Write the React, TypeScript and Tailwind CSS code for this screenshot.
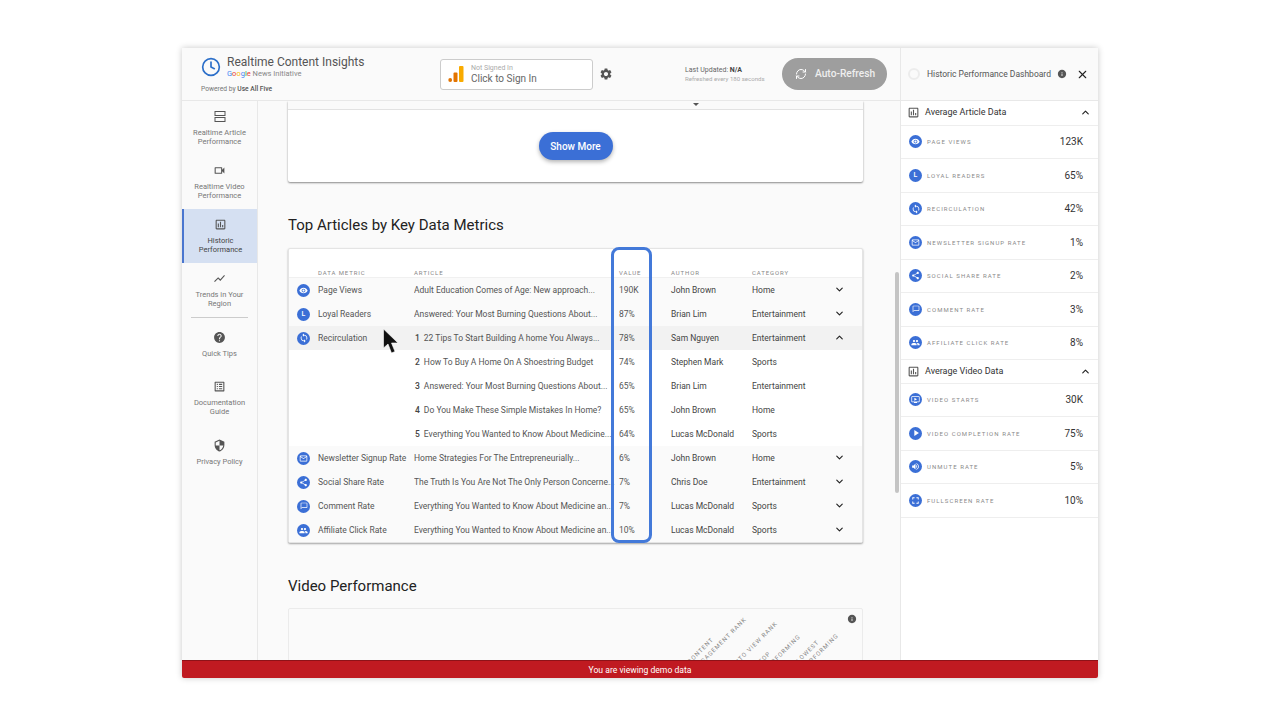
import type {ReactNode} from "react";
import {ChevronDown, ChevronUp, Clock, RefreshCw, X} from "lucide-react";
import {
  MdChatBubbleOutline,
  MdFullscreen,
  MdHelp,
  MdInfo,
  MdMailOutline,
  MdOndemandVideo,
  MdOutlineAssessment,
  MdOutlineListAlt,
  MdOutlineVideocam,
  MdPeople,
  MdPlayArrow,
  MdSecurity,
  MdSettings,
  MdShare,
  MdShowChart,
  MdSync,
  MdVisibility,
  MdVolumeUp,
} from "react-icons/md";

const MetricIcon = ({children}: {children: ReactNode}) => (
  <span className="flex items-center justify-center rounded-full bg-[#3b6fd6] text-white shrink-0 w-[13px] h-[13px]">
    {children}
  </span>
);

const icons: Record<string, ReactNode> = {
  views: <MdVisibility size={9} />,
  loyal: <span className="text-[7px] font-medium leading-none">L</span>,
  recirc: <MdSync size={10} />,
  mail: <MdMailOutline size={9} />,
  share: <MdShare size={9} />,
  comment: <MdChatBubbleOutline size={8} />,
  affiliate: <MdPeople size={9} />,
  starts: <MdOndemandVideo size={9} />,
  play: <MdPlayArrow size={10} />,
  mute: <MdVolumeUp size={9} />,
  full: <MdFullscreen size={11} />,
};

const TwoRowsIcon = () => (
  <svg width="12" height="11" viewBox="0 0 12 11" fill="none" stroke="currentColor" strokeWidth="1">
    <rect x="1" y="0.5" width="10" height="4" />
    <rect x="1" y="6.5" width="10" height="4" />
  </svg>
);

const navItems = [
  {icon: <TwoRowsIcon />, lines: ["Realtime Article", "Performance"]},
  {icon: <MdOutlineVideocam size={13} />, lines: ["Realtime Video", "Performance"]},
  {icon: <MdOutlineAssessment size={13} />, lines: ["Historic", "Performance"], active: true},
  {icon: <MdShowChart size={13} />, lines: ["Trends in Your", "Region"]},
];

const navItemsBottom = [
  {icon: <MdHelp size={13} />, lines: ["Quick Tips"], className: "h-[49px]"},
  {icon: <MdOutlineListAlt size={13} />, lines: ["Documentation", "Guide"], className: "h-[59px]"},
  {icon: <MdSecurity size={13} />, lines: ["Privacy Policy"], className: "h-[54px]"},
];

const rows = [
  {icon: "views", metric: "Page Views", article: "Adult Education Comes of Age: New approach...", value: "190K", author: "John Brown", category: "Home", chevron: "down"},
  {icon: "loyal", metric: "Loyal Readers", article: "Answered: Your Most Burning Questions About...", value: "87%", author: "Brian Lim", category: "Entertainment", chevron: "down"},
  {icon: "recirc", metric: "Recirculation", num: "1", article: "22 Tips To Start Building A home You Always...", value: "78%", author: "Sam Nguyen", category: "Entertainment", chevron: "up", open: true},
  {num: "2", article: "How To Buy A Home On A Shoestring Budget", value: "74%", author: "Stephen Mark", category: "Sports", sub: true},
  {num: "3", article: "Answered: Your Most Burning Questions About...", value: "65%", author: "Brian Lim", category: "Entertainment", sub: true},
  {num: "4", article: "Do You Make These Simple Mistakes In Home?", value: "65%", author: "John Brown", category: "Home", sub: true},
  {num: "5", article: "Everything You Wanted to Know About Medicine...", value: "64%", author: "Lucas McDonald", category: "Sports", sub: true},
  {icon: "mail", metric: "Newsletter Signup Rate", article: "Home Strategies For The Entrepreneurially...", value: "6%", author: "John Brown", category: "Home", chevron: "down"},
  {icon: "share", metric: "Social Share Rate", article: "The Truth Is You Are Not The Only Person Concerne...", value: "7%", author: "Chris Doe", category: "Entertainment", chevron: "down"},
  {icon: "comment", metric: "Comment Rate", article: "Everything You Wanted to Know About Medicine an...", value: "7%", author: "Lucas McDonald", category: "Sports", chevron: "down"},
  {icon: "affiliate", metric: "Affiliate Click Rate", article: "Everything You Wanted to Know About Medicine an...", value: "10%", author: "Lucas McDonald", category: "Sports", chevron: "down"},
];

const articleData = [
  {icon: "views", label: "PAGE VIEWS", value: "123K"},
  {icon: "loyal", label: "LOYAL READERS", value: "65%"},
  {icon: "recirc", label: "RECIRCULATION", value: "42%"},
  {icon: "mail", label: "NEWSLETTER SIGNUP RATE", value: "1%"},
  {icon: "share", label: "SOCIAL SHARE RATE", value: "2%"},
  {icon: "comment", label: "COMMENT RATE", value: "3%"},
  {icon: "affiliate", label: "AFFILIATE CLICK RATE", value: "8%"},
];

const videoData = [
  {icon: "starts", label: "VIDEO STARTS", value: "30K"},
  {icon: "play", label: "VIDEO COMPLETION RATE", value: "75%"},
  {icon: "mute", label: "UNMUTE RATE", value: "5%"},
  {icon: "full", label: "FULLSCREEN RATE", value: "10%"},
];

// rotated column headings of the chart, only their top ends are visible
const chartLabels = [
  {lines: ["CONTENT", "ENGAGEMENT RANK"], className: "left-[396px] top-[50px]"},
  {lines: ["AUTO VIEW RANK"], className: "left-[440px] top-[54px]"},
  {lines: ["TOP", "PERFORMING"], className: "left-[467px] top-[50px]"},
  {lines: ["LOWEST", "PERFORMING"], className: "left-[505px] top-[49px]"},
];

const NavItem = ({icon, lines, active, className = "h-[54px]"}: {icon: ReactNode; lines: string[]; active?: boolean; className?: string}) => (
  <div className={`${className} flex flex-col items-center pt-[8px] ${active ? "bg-[#d5e0f2] border-l-2 border-[#4a76cf] text-[#444]" : "text-[#777]"}`}>
    <span className="h-[14px] flex items-center text-[#555]">{icon}</span>
    <span className="mt-[4.5px] text-[7.5px] leading-[9.5px] text-center">
      {lines.map((line) => <span key={line} className="block">{line}</span>)}
    </span>
  </div>
);

const SideSection = ({title, data, headerClass}: {title: string; data: typeof articleData; headerClass: string}) => (
  <>
    <div className={`${headerClass} flex items-center pl-[6px] pr-[7px] border-b border-[#eee]`}>
      <MdOutlineAssessment size={13} className="text-[#555]" />
      <span className="ml-[5px] text-[9px] text-[#333] flex-1">{title}</span>
      <ChevronUp size={11} strokeWidth={2.5} className="text-[#222]" />
    </div>
    {data.map((item) => (
      <div key={item.label} className="h-[33.5px] flex items-center pl-[8px] pr-[15px] border-b border-[#eee]">
        <MetricIcon>{icons[item.icon]}</MetricIcon>
        <span className="ml-[5px] text-[6px] tracking-[1.05px] text-[#8a8a8a] flex-1">{item.label}</span>
        <span className="text-[10px] text-[#333]">{item.value}</span>
      </div>
    ))}
  </>
);

const App = () => {
  return (
    <div className="w-[1280px] h-[720px] bg-white pt-[48px] pl-[182px] font-[Roboto,sans-serif] overflow-hidden">
      <div className="relative w-[916px] h-[630px] flex flex-col shadow-[0_0_6px_rgba(0,0,0,0.22)] rounded-b-[2px]">
        <div className="h-[612px] flex">
          <div className="w-[718px] flex flex-col">
            {/* top bar */}
            <header className="h-[53px] shrink-0 flex items-center bg-[#fafafa] border-b border-[#e8e8e8] relative z-10">
              <div className="w-[258px] pl-[19px] shrink-0">
                <div className="flex items-center gap-[6px]">
                  <Clock size={20} strokeWidth={2} className="text-[#2c6fc9]" />
                  <div>
                    <div className="text-[12px] leading-[13px] text-[#555]">Realtime Content Insights</div>
                    <div className="text-[7.5px] leading-[9px] text-[#888]">
                      <span className="text-[#4285f4]">G</span>
                      <span className="text-[#ea4335]">o</span>
                      <span className="text-[#fbbc05]">o</span>
                      <span className="text-[#4285f4]">g</span>
                      <span className="text-[#34a853]">l</span>
                      <span className="text-[#ea4335]">e</span> News Initiative
                    </div>
                  </div>
                </div>
                <div className="mt-[7px] text-[6.7px] leading-[8px] text-[#777]">
                  Powered by <span className="font-medium text-[#555]">Use All Five</span>
                </div>
              </div>
              <div className="w-[153px] h-[31px] flex items-center border border-[#ccc] rounded-[3px] bg-white pl-[7px]">
                <svg width="16" height="18" viewBox="0 0 16 18">
                  <circle cx="2.2" cy="15" r="1.9" fill="#e37400" />
                  <rect x="5.5" y="7.5" width="4" height="9.5" rx="1" fill="#e37400" />
                  <rect x="11" y="1" width="4.5" height="16" rx="1" fill="#f9ab00" />
                </svg>
                <div className="ml-[7px] pt-[2px]">
                  <div className="text-[7px] leading-[8px] text-[#aaa]">Not Signed In</div>
                  <div className="text-[10px] leading-[14px] text-[#666]">Click to Sign In</div>
                </div>
              </div>
              <MdSettings size={14} className="ml-[6px] text-[#555]" />
              <div className="ml-[72px] w-[93px] shrink-0">
                <div className="text-[7px] leading-[9px] text-[#666]">Last Updated: <span className="font-bold text-[#444]">N/A</span></div>
                <div className="text-[6.1px] leading-[8px] text-[#aaa]">Refreshed every 180 seconds</div>
              </div>
              <div className="ml-[4px] w-[105px] h-[32px] shrink-0 flex items-center rounded-full bg-[#9e9e9e] text-white pl-[13px]">
                <RefreshCw size={12} strokeWidth={2} />
                <span className="ml-[8px] text-[10.2px] font-medium text-[#eee]">Auto-Refresh</span>
              </div>
            </header>

            <div className="flex-1 flex min-h-0">
              {/* left nav */}
              <nav className="w-[76px] shrink-0 bg-[#fafafa] border-r border-[#e8e8e8]">
                {navItems.map((item) => <NavItem key={item.lines[0]} {...item} />)}
                <div className="mx-[9px] border-t border-[#ccc]" />
                <div className="pt-[4px]">
                  {navItemsBottom.map((item) => <NavItem key={item.lines[0]} {...item} />)}
                </div>
              </nav>

              {/* scrolling content */}
              <main className="relative flex-1 min-w-0 bg-[#fafafa] overflow-hidden pl-[30px]">
                <div className="w-[575px] h-[81px] bg-white rounded-b-[2px] shadow-[0_1px_2px_rgba(0,0,0,0.45)]">
                  <div className="h-[9px] bg-[#fafafa] border-b border-[#e2e2e2] flex justify-center">
                    <span className="ml-[241px] mt-[2px] w-0 h-0 border-x-[3px] border-x-transparent border-t-[3px] border-t-[#555]" />
                  </div>
                  <div className="flex justify-center pt-[22px]">
                    <button className="w-[74px] h-[28px] rounded-full bg-[#3b6fd6] text-white text-[10px] font-medium shadow-[0_2px_4px_rgba(0,0,0,0.3)]">
                      Show More
                    </button>
                  </div>
                </div>

                <h2 className="mt-[33px] text-[15px] leading-[20px] text-[#222]">Top Articles by Key Data Metrics</h2>

                <div className="relative mt-[13px] w-[575px] h-[295px] bg-white border border-[#e4e4e4] rounded-[2px] shadow-[0_1px_2px_rgba(0,0,0,0.35)]">
                  <div className="h-[29px] pt-[20px] grid grid-cols-[29px_96px_205px_52px_81px_1fr] text-[6px] tracking-[0.9px] leading-[8px] text-[#888] border-b border-[#f0f0f0]">
                    <span />
                    <span>DATA METRIC</span>
                    <span>ARTICLE</span>
                    <span>VALUE</span>
                    <span>AUTHOR</span>
                    <span>CATEGORY</span>
                  </div>
                  {rows.map((row) => (
                    <div
                      key={row.article + row.value}
                      className={`h-[24px] grid grid-cols-[29px_96px_205px_52px_81px_1fr] items-center text-[8.5px] text-[#555] ${row.open ? "bg-[#f2f2f2]" : row.sub ? "bg-white" : "bg-[#fafafa]"}`}
                    >
                      <span className="flex justify-center">
                        {row.icon && <MetricIcon>{icons[row.icon]}</MetricIcon>}
                      </span>
                      <span className="whitespace-nowrap">{row.metric}</span>
                      <span className="whitespace-nowrap overflow-hidden">
                        {row.num && <span className="font-medium text-[#444] ml-px mr-[4px]">{row.num}</span>}
                        {row.article}
                      </span>
                      <span>{row.value}</span>
                      <span className="text-[#444] whitespace-nowrap">{row.author}</span>
                      <span className="flex items-center text-[#444]">
                        <span className="w-[82px]">{row.category}</span>
                        {row.chevron === "down" && <ChevronDown size={11} strokeWidth={2.5} className="mb-[2px] text-[#222]" />}
                        {row.chevron === "up" && <ChevronUp size={11} strokeWidth={2.5} className="mb-[2px] text-[#222]" />}
                      </span>
                    </div>
                  ))}
                  {/* highlight around the value column */}
                  <div className="absolute left-[322px] top-[-2px] w-[41px] h-[296px] border-[3px] border-[#4379d9] rounded-[8px]" />
                </div>

                <h2 className="mt-[33px] text-[15px] leading-[20px] text-[#222]">Video Performance</h2>

                <div className="relative mt-[12px] w-[575px] h-[200px] bg-[#fafafa] border border-[#ebebeb] rounded-[2px]">
                  <MdInfo size={10} className="absolute right-[5px] top-[5px] text-[#555]" />
                  {chartLabels.map((label) => (
                    <span
                      key={label.lines.join(" ")}
                      className={`absolute whitespace-nowrap text-[6px] leading-[9px] tracking-[1px] text-[#888] origin-top-left -rotate-45 ${label.className}`}
                    >
                      {label.lines.map((line) => <span key={line} className="block">{line}</span>)}
                    </span>
                  ))}
                </div>

                <div className="absolute left-[637px] top-[171px] w-[4px] h-[221px] bg-[#c4c4c4] rounded-full" />
              </main>
            </div>
          </div>

          {/* right panel */}
          <aside className="w-[198px] flex flex-col bg-white border-l border-[#e8e8e8]">
            <div className="h-[53px] shrink-0 flex items-center bg-[#fafafa] border-b border-[#e8e8e8] pl-[7px]">
              <span className="w-[12px] h-[12px] rounded-full bg-[#fafafa] border-2 border-[#ececec]" />
              <span className="ml-[7px] text-[8.5px] text-[#555] whitespace-nowrap">Historic Performance Dashboard</span>
              <MdInfo size={10} className="ml-[6px] text-[#555]" />
              <X size={13} strokeWidth={2} className="ml-[9px] text-[#222]" />
            </div>
            <SideSection title="Average Article Data" data={articleData} headerClass="h-[24.5px]" />
            <SideSection title="Average Video Data" data={videoData} headerClass="h-[23.5px]" />
          </aside>
        </div>

        <div className="h-[18px] shrink-0 flex items-center justify-center bg-[#c01a21] border-t border-[#8e1218] rounded-b-[2px] pt-px text-[8.6px] text-white">
          You are viewing demo data
        </div>

        {/* mouse pointer */}
        <svg className="absolute left-[200px] top-[280px]" width="18" height="28" viewBox="0 0 18 28">
          <path d="M1.5 1 L1.5 20 L6 16 L9.5 25 L13 23.5 L9.5 15 L16 15 Z" fill="#111" stroke="#fff" strokeWidth="0.6" />
        </svg>
      </div>
    </div>
  );
};

export default App;
